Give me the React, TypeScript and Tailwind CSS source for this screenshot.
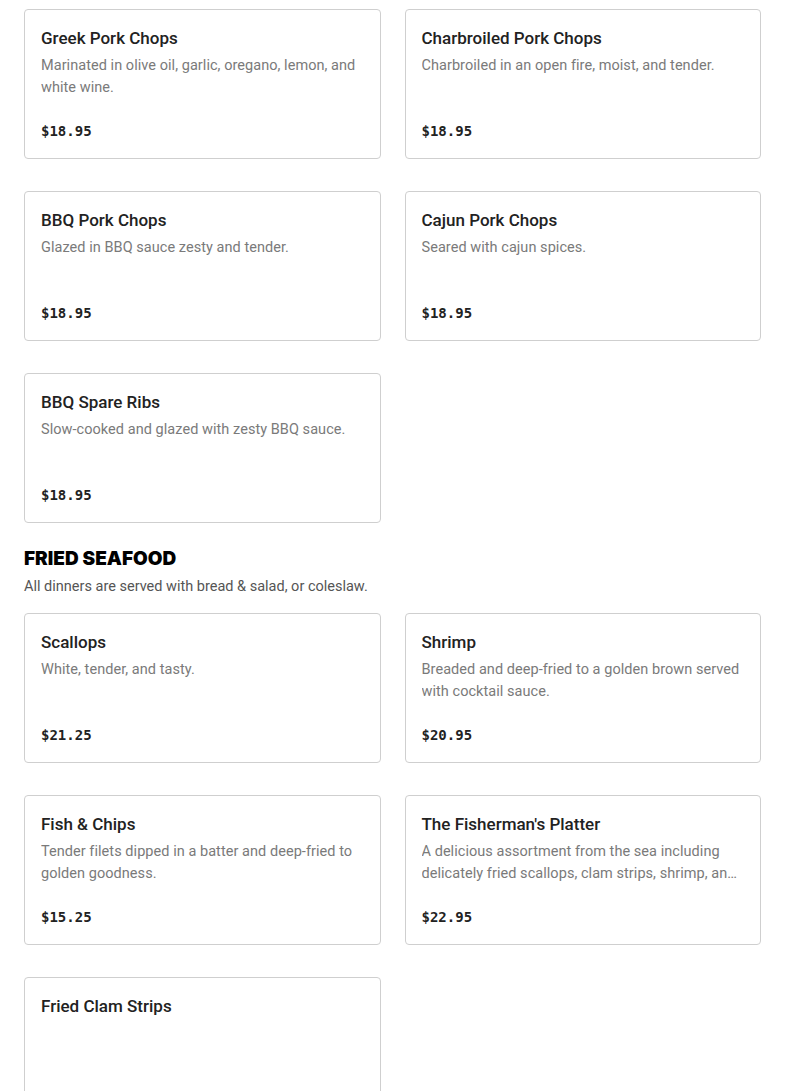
type Item = { name: string; desc?: string; price: string };

const porkTail: Item[] = [
  { name: "Greek Pork Chops", desc: "Marinated in olive oil, garlic, oregano, lemon, and white wine.", price: "$18.95" },
  { name: "Charbroiled Pork Chops", desc: "Charbroiled in an open fire, moist, and tender.", price: "$18.95" },
  { name: "BBQ Pork Chops", desc: "Glazed in BBQ sauce zesty and tender.", price: "$18.95" },
  { name: "Cajun Pork Chops", desc: "Seared with cajun spices.", price: "$18.95" },
  { name: "BBQ Spare Ribs", desc: "Slow-cooked and glazed with zesty BBQ sauce.", price: "$18.95" },
];

const seafood: Item[] = [
  { name: "Scallops", desc: "White, tender, and tasty.", price: "$21.25" },
  { name: "Shrimp", desc: "Breaded and deep-fried to a golden brown served with cocktail sauce.", price: "$20.95" },
  { name: "Fish & Chips", desc: "Tender filets dipped in a batter and deep-fried to golden goodness.", price: "$15.25" },
  {
    name: "The Fisherman's Platter",
    desc: "A delicious assortment from the sea including delicately fried scallops, clam strips, shrimp, and fish.",
    price: "$22.95",
  },
  { name: "Fried Clam Strips", price: "$16.95" },
];

function Card({ item }: { item: Item }) {
  return (
    <article className="flex h-[150px] flex-col rounded-[4px] border border-[#cfcfcf] bg-white px-4 pt-4">
      <h3 className="text-[17px] leading-6 font-medium text-[#222]">{item.name}</h3>
      <p className="mt-[5px] line-clamp-2 h-[44px] text-[14.5px] leading-[22px] tracking-[0.05px] text-[#7a7a7a]">
        {item.desc}
      </p>
      <p
        className={`mt-5 text-[14px] leading-6 font-bold ${item.desc ? "text-[#222]" : "text-[#ececec]"}`}
        style={{ fontFamily: '"DejaVu Sans Mono", "Liberation Mono", monospace' }}
      >
        {item.price}
      </p>
    </article>
  );
}

export default function App() {
  return (
    <div
      className="min-h-screen bg-white px-6 pt-[9px] pb-10"
      style={{ fontFamily: 'Roboto, "Noto Sans", sans-serif' }}
    >
      <div className="grid grid-cols-2 gap-x-6 gap-y-8">
        {porkTail.map((it) => (
          <Card key={it.name} item={it} />
        ))}
      </div>

      <section className="mt-[22px]">
        <h2
          className="text-[19px] leading-7 font-black text-black"
          style={{ fontFamily: 'Inter, "Noto Sans", sans-serif' }}
        >
          FRIED SEAFOOD
        </h2>
        <p className="mt-[3px] text-[14.5px] leading-[22px] text-[#555]">
          All dinners are served with bread &amp; salad, or coleslaw.
        </p>
        <div className="mt-[15px] grid grid-cols-2 gap-x-6 gap-y-8">
          {seafood.map((it) => (
            <Card key={it.name} item={it} />
          ))}
        </div>
      </section>
    </div>
  );
}
